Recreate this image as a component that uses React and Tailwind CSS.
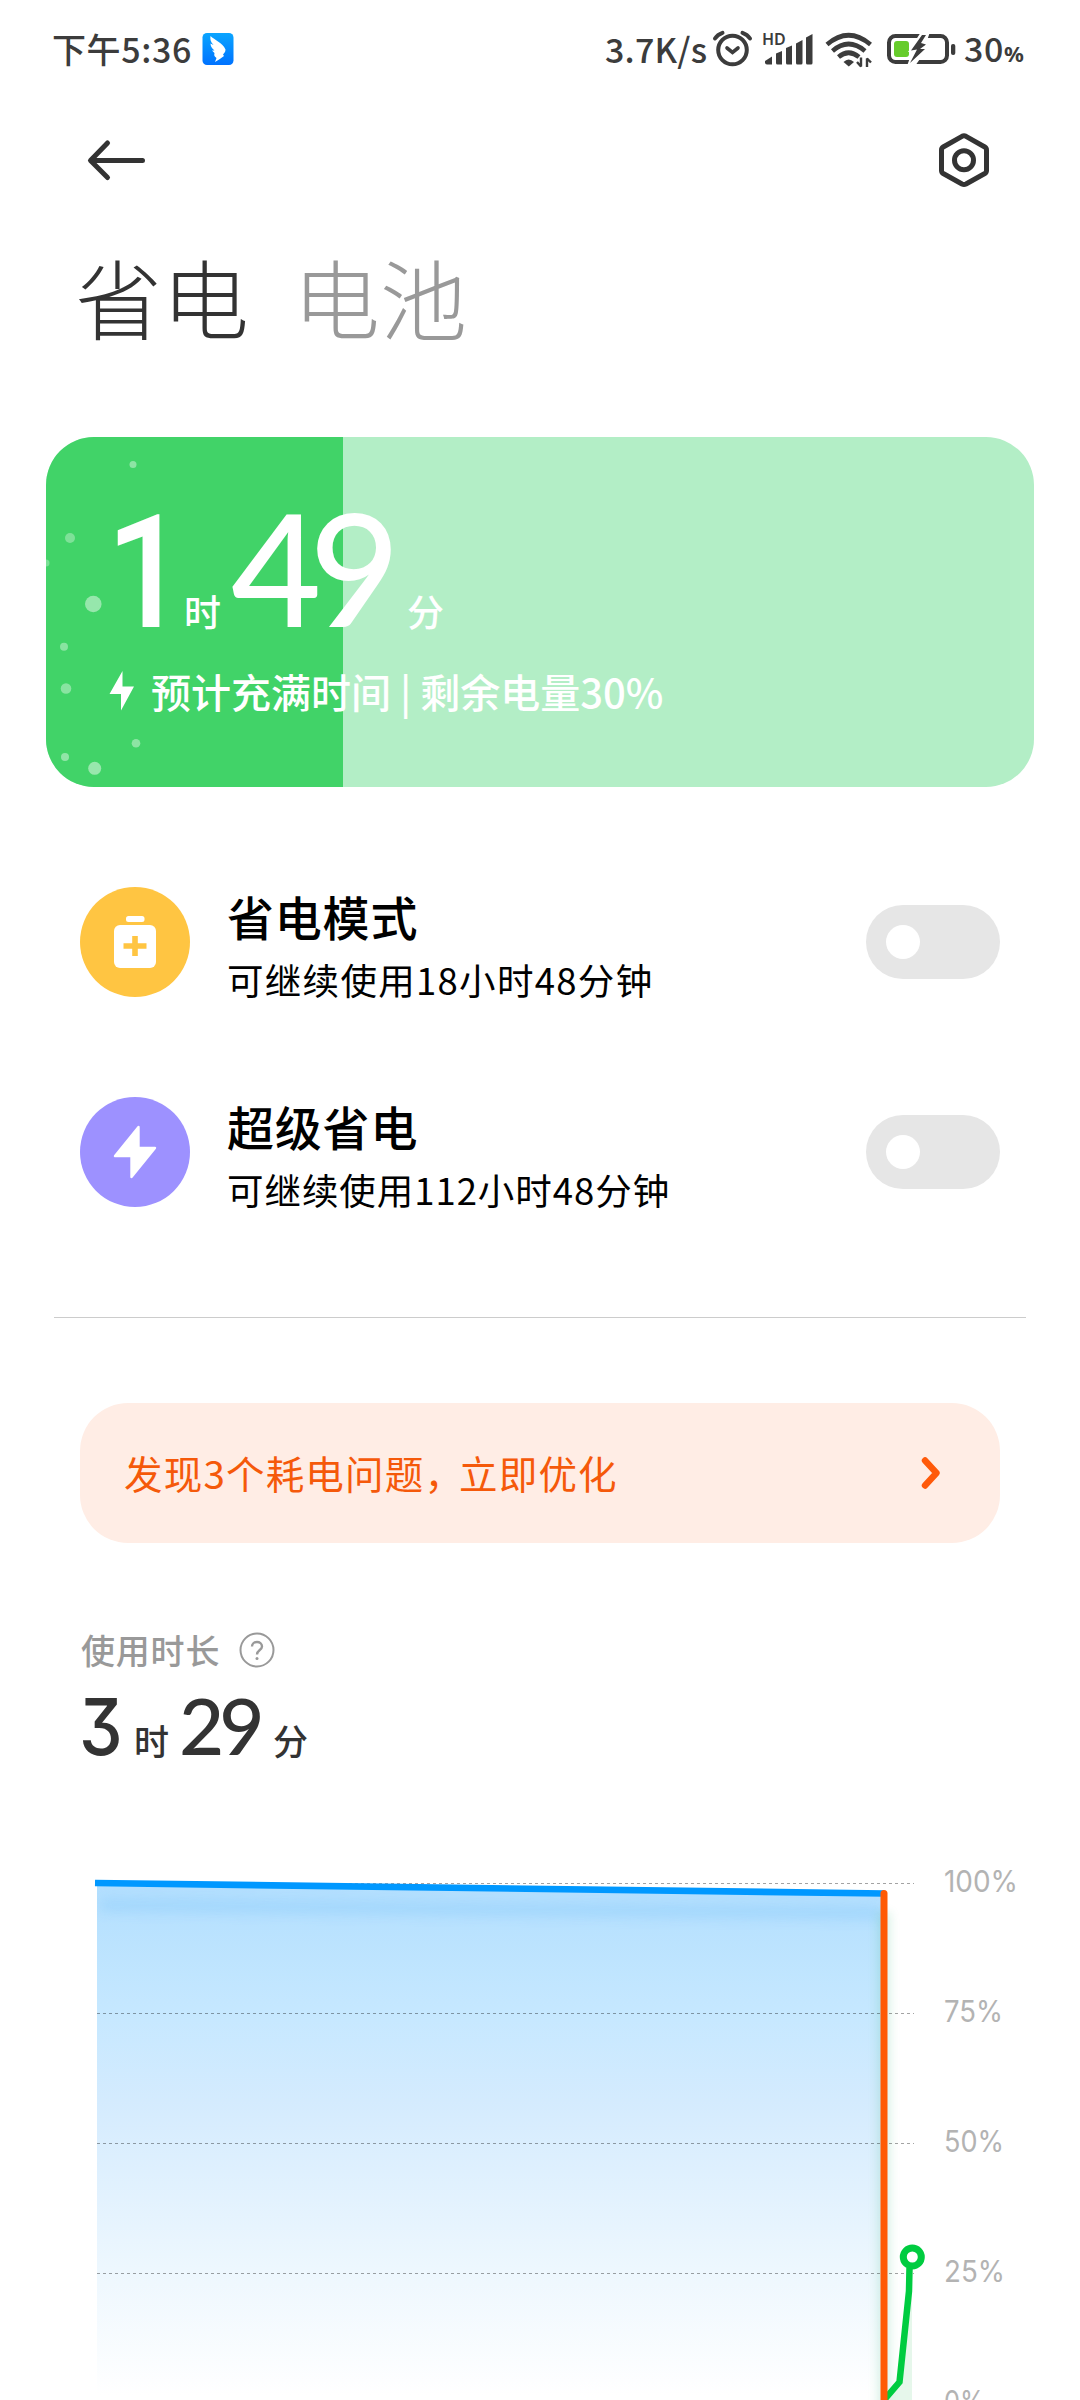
const CJK = "font-['Noto_Sans_CJK_SC',sans-serif]";

function StatusBar() {
  return (
    <div className="flex h-[100px] shrink-0 items-center pl-[52px] text-[#3c3c3c] font-medium text-[34px] leading-[50px]">
      <span className="-mt-[2px] w-[150px] whitespace-nowrap tracking-[0.6px]">下午5:36</span>
      <svg width="32" height="32" viewBox="0 0 31 32" className="-mt-[2px] block">
        <defs>
          <linearGradient id="app" x1="0" y1="0" x2="0" y2="1">
            <stop offset="0" stopColor="#0aa5ff" />
            <stop offset="1" stopColor="#0072ff" />
          </linearGradient>
        </defs>
        <rect width="31" height="32" rx="4.5" fill="url(#app)" />
        <path d="M8 3 C12 7 20 9.500 23 16.500 C23 19 21.500 20 20.500 21.500 L21.500 23 C19 25 16 27 12.500 29 L14 25 C11.500 23.500 11.500 22 12 20 L9.500 17.500 L12 17.500 C9 15 8 13 8 10.500 L11 12 C8 9 7.500 6 8 3 Z" fill="#fff" />
      </svg>
      <div className="-mt-[2px] ml-[371px] w-[107px] whitespace-nowrap tracking-[0.2px]">3.7K/s</div>
      <svg width="252" height="44" viewBox="712 28 252 44" fill="none" className="block shrink-0">
        <g stroke="#3c3c3c" strokeLinecap="round">
          <circle cx="732.500" cy="50" r="14.300" strokeWidth="4" />
          <path d="M727 48 L732.500 52.500 L738 48" strokeWidth="3.600" />
          <path d="M715 38.500 Q717.500 34.500 722.500 32.800 M750 38.500 Q747.500 34.500 742.500 32.800" strokeWidth="4" />
        </g>
        <g fill="#3c3c3c">
          <path d="M765 61 L772 56.500 V64.500 H767 Q765 64.500 765 62.500Z" />
          <path d="M776 53.500 L782 51 V64.500 H777.500 Q776 64.500 776 63Z" />
          <path d="M786 48 L792 45.500 V64.500 H787.500 Q786 64.500 786 63Z" />
          <path d="M796 43.500 L802.500 40 V63 Q802.500 64.500 801 64.500 H797.500 Q796 64.500 796 63Z" />
          <path d="M806 37.500 L812.500 34 V63 Q812.500 64.500 811 64.500 H807.500 Q806 64.500 806 63Z" />
        </g>
        <text x="762" y="45" fontSize="16" fontWeight="600" fill="#3c3c3c" fontFamily="Noto Sans">HD</text>
        <g stroke="#3c3c3c" strokeWidth="4.600">
          <path d="M827 44.500 Q848.500 26 870.500 44.500" />
          <path d="M832.500 51 Q848.500 37 865 51" />
          <path d="M838.500 57 Q848.500 48.500 859 57" />
        </g>
        <path d="M843.500 62 Q848.500 57 854 62 L848.800 66.500Z" fill="#3c3c3c" />
        <path d="M861 57.500 V66.500 L857 62 M867 67 V58.500 L871 62.500" stroke="#3c3c3c" strokeWidth="2.400" strokeLinejoin="bevel" />
        <rect x="889" y="36" width="58" height="26" rx="6.500" stroke="#3c3c3c" strokeWidth="4" />
        <rect x="894" y="41" width="15" height="16" rx="3" fill="#66cc2b" />
        <path d="M921 32 L908 52 H912 L907 66 H915 L929 46 H925 L930 32Z" fill="#fff" />
        <path d="M922 35 L911 50.500 L917 49.500 L910 63 L925 49 L920 49 L926 44.500 L921 43 L926 35Z" fill="#3c3c3c" />
        <rect x="951" y="44" width="4.300" height="11" rx="2" fill="#3c3c3c" />
      </svg>
      <div className="flex items-baseline whitespace-nowrap">
        <span className="w-[40px] tracking-[0.5px]">30</span>
        <span className="inline-block font-['Noto_Sans'] text-[22px] font-bold">%</span>
      </div>
    </div>
  );
}

function Header() {
  return (
    <>
      <div className="flex h-[120px] shrink-0 items-center justify-between pl-[84px] pr-[89px]">
        <svg width="64" height="44" viewBox="84 138 64 44" fill="none" stroke="#333" strokeWidth="5" strokeLinecap="round" strokeLinejoin="round">
          <path d="M107.500 143 L90.500 160.500 L107.500 177.500 M91 160.500 H142.500" />
        </svg>
        <svg width="54" height="58" viewBox="937 131 54 58" fill="none" stroke="#333" strokeWidth="5" strokeLinejoin="round">
          <path d="M962 136.300 Q964 135.300 966 136.300 L984.800 147 Q986.500 148 986.500 150 V170.500 Q986.500 172.500 984.800 173.500 L966 184 Q964 185 962 184 L943.200 173.500 Q941.500 172.500 941.500 170.500 V150 Q941.500 148 943.200 147Z" />
          <circle cx="964" cy="160.200" r="9.500" />
        </svg>
      </div>
      <div className="flex h-[217px] shrink-0 items-start gap-[44px] pl-[75px] pt-[33px] text-[87px] font-light leading-[86px]">
        <span className="text-[#333]">省电</span>
        <span className="text-[#999]">电池</span>
      </div>
    </>
  );
}

const BUBBLES = [
  [133, 464.5, 3.5, 0.4], [70, 538, 5, 0.32], [46, 563, 3.5, 0.3], [93.3, 604, 8.3, 0.45], [64, 646.7, 4, 0.38],
  [66, 688.5, 5.3, 0.38], [136, 743.3, 4.3, 0.4], [65, 757, 4, 0.42], [94.7, 768.3, 6.5, 0.46],
];

function ChargeCard() {
  return (
    <div className="relative mx-[46px] flex h-[350px] shrink-0 flex-col overflow-hidden rounded-[48px] bg-[#b3eec6] text-white">
      <div className="absolute inset-y-0 left-0 w-[297px] bg-[#41d368]">
        <svg width="297" height="350" viewBox="46 437 297 350" className="block">
          {BUBBLES.map(([x, y, r, o], i) => <circle key={i} cx={x} cy={y} r={r} fill="#fff" opacity={o} />)}
        </svg>
      </div>
      <div className="relative mt-[57px] flex h-[145px] items-baseline pl-[60px] font-medium leading-[145px]">
        <span className="inline-block w-[78px] origin-left scale-x-[0.9] whitespace-nowrap font-['Roboto'] text-[158px] leading-[145px]">1</span>
        <span className="w-[47px] text-[37px]">时</span>
        <span className="inline-block w-[176px] whitespace-nowrap font-['Lato'] text-[156px] tracking-[-12px]">49</span>
        <span className="text-[37px]">分</span>
      </div>
      <div className="relative mt-[29px] flex h-[46px] items-center pl-[63px] text-[40px] font-medium leading-[46px]">
        <svg width="26" height="40" viewBox="0 0 26 40" className="mr-[16px] block">
          <path d="M13.500 0 L0.500 23 H12 V39.500 L25 15.500 H13.500Z" fill="#fff" />
        </svg>
        <span className="whitespace-nowrap">预计充满时间 | 剩余电量30%</span>
      </div>
    </div>
  );
}

function ModeRow({ color, icon, title, note, noteSpacing }) {
  return (
    <div className="flex h-[210px] items-center pl-[80px] pr-[80px]">
      <div className={`flex size-[110px] items-center justify-center rounded-full ${color}`}>{icon}</div>
      <div className="ml-[37px] flex-1 pt-[12px] text-black">
        <div className="text-[47px] font-medium leading-[62px] tracking-[0.8px]">{title}</div>
        <div className={`text-[36.5px] leading-[65px] ${noteSpacing}`}>{note}</div>
      </div>
      <div className="flex h-[74px] w-[134px] items-center rounded-full bg-[#e6e6e6] pl-[20px]">
        <div className="size-[34px] rounded-full bg-white" />
      </div>
    </div>
  );
}

const batteryIcon = (
  <svg width="110" height="110" viewBox="80 887 110 110">
    <rect x="126" y="916" width="18.500" height="6" rx="2.500" fill="#fff" />
    <rect x="114" y="925" width="42" height="43" rx="6" fill="#fff" />
    <path d="M135 936 V956 M123.500 946 H146.500" stroke="#ffc542" strokeWidth="5.600" />
  </svg>
);

const boltIcon = (
  <svg width="110" height="110" viewBox="80 1097 110 110">
    <path d="M138.500 1127 L115 1156 H131.500 V1177 L155 1148 H138.500Z" fill="#fff" stroke="#fff" strokeWidth="2.400" strokeLinejoin="round" />
  </svg>
);

function UsageChart() {
  return (
    <svg width="1080" height="560" viewBox="0 1840 1080 560" fill="none" className="block shrink-0">
      <defs>
        <linearGradient id="area" gradientUnits="userSpaceOnUse" x1="0" y1="1888" x2="0" y2="2395">
          <stop offset="0" stopColor="#b3dffe" />
          <stop offset="0.250" stopColor="#c6e8ff" />
          <stop offset="0.420" stopColor="#d4ebfe" />
          <stop offset="0.750" stopColor="#edf7fe" />
          <stop offset="1" stopColor="#ffffff" />
        </linearGradient>
        <filter id="soft" x="-20%" y="-400%" width="140%" height="900%"><feGaussianBlur stdDeviation="6" /></filter>
        <filter id="softv" filterUnits="userSpaceOnUse" x="850" y="1880" width="80" height="560"><feGaussianBlur stdDeviation="5" /></filter>
        <clipPath id="inside"><path d="M97 1883 L884 1893 V2400 H97Z" /></clipPath>
      </defs>
      <path d="M97 1883 L884 1893 V2400 H97Z" fill="url(#area)" />
      <g clipPath="url(#inside)">
        <path d="M100 1905 L880 1913" stroke="#7cc4fa" strokeWidth="13" opacity="0.32" filter="url(#soft)" />
      </g>
      <path d="M884 1912 V2430" stroke="#20b070" strokeWidth="14" opacity="0.15" filter="url(#softv)" />
      <path d="M884 2400 L899 2382 L909 2270 H912 V2400Z" fill="#d9f3e0" opacity="0.65" />
      <g stroke="#000" strokeOpacity="0.36" strokeWidth="1" strokeDasharray="3 3">
        <path d="M97 1883.500 H914" />
        <path d="M97 2013.500 H914" />
        <path d="M97 2143.500 H914" />
        <path d="M97 2273.500 H914" />
      </g>
      <path d="M95 1883 L884 1893.500" stroke="#0098ff" strokeWidth="6.700" />
      <path d="M909.500 2268 L909 2291 L899.500 2382 L884 2400" stroke="#00cc40" strokeWidth="6.500" />
      <path d="M884 1893.500 V2410" stroke="#ff5a05" strokeWidth="7" strokeLinecap="round" />
      <circle cx="912.300" cy="2257" r="9" stroke="#00cc40" strokeWidth="7" fill="#fff" />
      <g fill="#b3b3b3" fontFamily="Inter" fontSize="29.500">
        <text x="944" y="1892" textLength="74" lengthAdjust="spacingAndGlyphs">100%</text>
        <text x="944" y="2022" textLength="59" lengthAdjust="spacingAndGlyphs">75%</text>
        <text x="944" y="2152" textLength="60" lengthAdjust="spacingAndGlyphs">50%</text>
        <text x="944" y="2282" textLength="61" lengthAdjust="spacingAndGlyphs">25%</text>
        <text x="944" y="2412" textLength="41" lengthAdjust="spacingAndGlyphs">0%</text>
      </g>
    </svg>
  );
}

export default function App() {
  return (
    <div className={`flex h-[2400px] w-[1080px] flex-col overflow-hidden bg-white ${CJK}`}>
      <StatusBar />
      <Header />
      <ChargeCard />
      <div className="mt-[50px] shrink-0">
        <ModeRow color="bg-[#ffc542]" icon={batteryIcon} title="省电模式" note="可继续使用18小时48分钟" noteSpacing="tracking-[1.3px]" />
        <ModeRow color="bg-[#9d91ff]" icon={boltIcon} title="超级省电" note="可继续使用112小时48分钟" noteSpacing="tracking-[0.95px]" />
      </div>
      <div className="mx-[54px] mt-[60px] h-px shrink-0 bg-[#ccc]" />
      <div className="mx-[80px] mt-[85px] flex h-[140px] shrink-0 items-center justify-between rounded-[48px] bg-[#ffede5] pl-[44px] pr-[56px] text-[38.500px] tracking-[1.2px] text-[#f5590a]">
        <span className="whitespace-nowrap">发现3个耗电问题<span className="tracking-[-4px]">，</span>立即优化</span>
        <svg width="26" height="38" viewBox="0 0 26 38" fill="none" stroke="#ff5a0a" strokeWidth="6.400" strokeLinecap="round" strokeLinejoin="round">
          <path d="M7 6.500 L18.500 19 L7 31.500" />
        </svg>
      </div>
      <div className="mt-[84px] flex h-[46px] shrink-0 items-center pl-[81px] text-[34px] font-medium leading-[46px] tracking-[0.8px] text-[#999]">
        <span className="w-[158px]">使用时长</span>
        <svg width="36" height="36" viewBox="0 0 36 36" fill="none" stroke="#999" strokeWidth="2">
          <circle cx="18" cy="18" r="16.500" />
          <path d="M13 14.500 C13 8.500 23 8.500 23 14.500 C23 18 18 18 18 22.500" strokeWidth="2.400" />
          <circle cx="18" cy="26.500" r="1.500" fill="#999" stroke="none" />
        </svg>
      </div>
      <div className="mt-[7px] flex h-[90px] shrink-0 items-baseline pl-[79px] font-medium leading-[90px] text-[#333]">
        <span className="inline-block w-[55px] origin-left scale-x-[0.89] font-['Inter'] text-[78px] font-[450] [font-feature-settings:'cv09']">3</span>
        <span className="w-[45px] text-[35px]">时</span>
        <span className="inline-block w-[94px] whitespace-nowrap font-['Lato'] text-[78px] font-medium tracking-[-5px]">29</span>
        <span className="text-[35px]">分</span>
      </div>
      <div className="h-[70px] shrink-0" />
      <UsageChart />
    </div>
  );
}
